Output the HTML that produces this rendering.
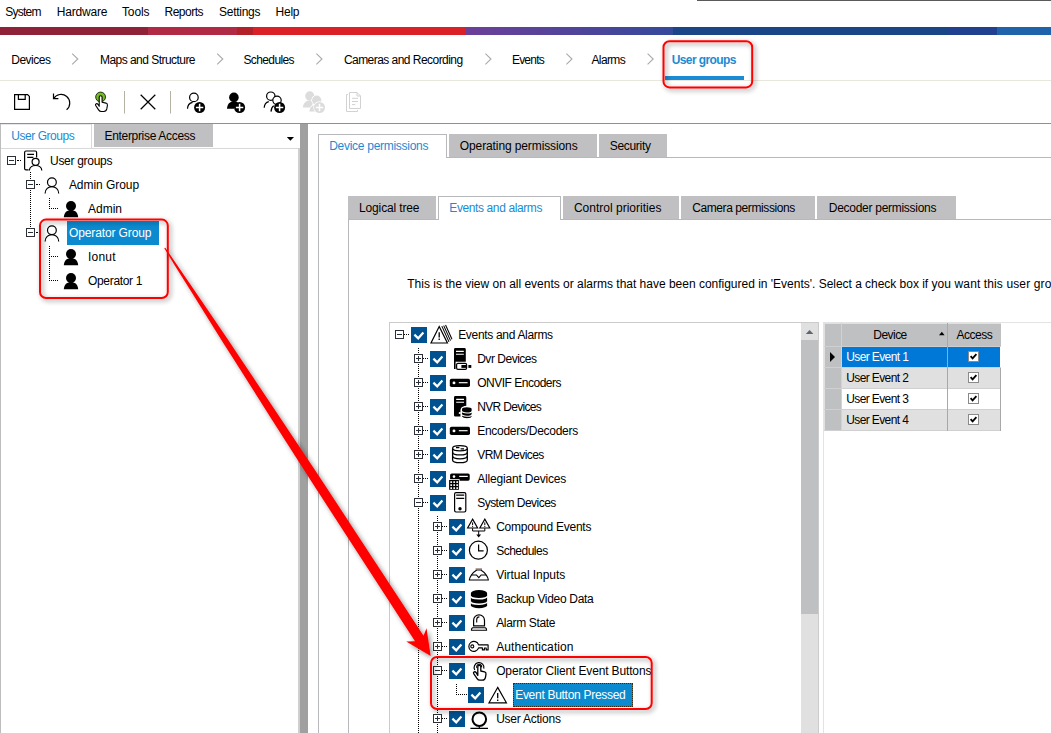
<!DOCTYPE html>
<html lang="en">
<head>
<meta charset="utf-8">
<title>Configuration Client - User groups</title>
<style>
html,body{margin:0;padding:0;background:#fff}
body{width:1051px;height:733px;position:relative;overflow:hidden;font:12px/14px "Liberation Sans",sans-serif;color:#000}
.a{position:absolute;display:block}
.t{position:absolute;white-space:pre;line-height:14px;font-size:12px;z-index:3}
.ex{width:7px;height:7px;border:1px solid #2b3038;background:#fff}
.ex i{position:absolute;background:#2b3038}
.ex .h{left:1px;top:3px;width:5px;height:1px}
.ex .v{left:3px;top:1px;width:1px;height:5px}
.ck{width:16px;height:16px;background:#00518f}
.ck svg,.cb svg{display:block}
.cb{width:9px;height:9px;border:1px solid #8a8a8a;background:#fff}
.cb svg{margin:-1px}
</style>
</head>
<body>
<div class="a" style="left:697px;top:0px;width:354px;height:1px;background:#5a5a5a;"></div>
<div class="a" style="left:0px;top:27px;width:148px;height:8px;background:#8f2239;"></div>
<div class="a" style="left:148px;top:27px;width:89px;height:8px;background:#b02a45;"></div>
<div class="a" style="left:237px;top:27px;width:16px;height:8px;background:#b22028;"></div>
<div class="a" style="left:253px;top:27px;width:212px;height:8px;background:#dc2027;"></div>
<div class="a" style="left:673px;top:27px;width:277px;height:8px;background:#1a4688;"></div>
<div class="a" style="left:950px;top:27px;width:47px;height:8px;background:#21408f;"></div>
<div class="a" style="left:997px;top:27px;width:54px;height:8px;background:#1f63ab;"></div>
<div class="a" style="left:465px;top:27px;width:208px;height:8px;background:linear-gradient(90deg,#6d3f99,#35499b);"></div>
<div class="a" style="left:0px;top:80px;width:1051px;height:1px;background:#e7e7dc;"></div>
<div class="a" style="left:665px;top:76px;width:79px;height:4px;background:#1b8bd3;"></div>
<svg class="a" style="left:0px;top:0px;z-index:2;" width="1051" height="120" viewBox="0 0 1051 120"><polyline points="72.2,53.6 77.8,59 72.2,64.4" fill="none" stroke="#a9a9ae" stroke-width="1.1"/><polyline points="217.2,53.6 222.8,59 217.2,64.4" fill="none" stroke="#a9a9ae" stroke-width="1.1"/><polyline points="316.4,53.6 322,59 316.4,64.4" fill="none" stroke="#a9a9ae" stroke-width="1.1"/><polyline points="485.4,53.6 491,59 485.4,64.4" fill="none" stroke="#a9a9ae" stroke-width="1.1"/><polyline points="566.4,53.6 572,59 566.4,64.4" fill="none" stroke="#a9a9ae" stroke-width="1.1"/><polyline points="647.6,53.6 653.2,59 647.6,64.4" fill="none" stroke="#a9a9ae" stroke-width="1.1"/><path d="M14.6,94.6 H27.6 L29.4,96.4 V109.4 H14.6 Z" stroke="#000" fill="none" stroke-width="1.2"/><path d="M18.4,94.6 V99.4 H25.2 V94.6" stroke="#000" fill="none" stroke-width="1.2"/><path d="M53.6,98.6 A8.7,8.7 0 1 1 66.6,109.8" stroke="#000" fill="none" stroke-width="1.2"/><path d="M53.5,93.6 V98.7 H58.4" stroke="#000" fill="none" stroke-width="1.2"/><circle cx="100.6" cy="97" r="4.9" fill="#74bd1f" stroke="#1c1c1c" stroke-width="0.9"/><path d="M99.2,106.3 V97.2 a1.45,1.45 0 0 1 2.9,0 V102.2 l3.9,0.9 q1.6,0.5 1.4,2.2 l-0.6,3.6 q-0.5,2.6 -3,2.6 h-2.4 q-1.8,0 -2.8,-1.6 l-2.9,-4.4 q-0.6,-1.3 0.6,-1.8 q1,-0.3 1.8,0.8 z" fill="#fff" stroke="#000" stroke-width="1.1" stroke-linejoin="round"/><rect x="124" y="91" width="1" height="22.5" fill="#b4b2a2"/><rect x="170" y="91" width="1" height="22.5" fill="#b4b2a2"/><path d="M140.7,94.8 L155.3,109.3 M155.3,94.8 L140.7,109.3" stroke="#000" fill="none" stroke-width="1.25"/><circle cx="193.9" cy="97.4" r="4.3" stroke="#000" fill="none" stroke-width="1.2"/><path d="M187.5,108.8 Q187.6,103.3 192.6,102.3" stroke="#000" fill="none" stroke-width="1.2"/><circle cx="199.6" cy="107.5" r="5.5" fill="#000"/><path d="M195.9,107.5 h7.4 M199.6,103.8 v7.4" stroke="#fff" stroke-width="1.5" fill="none"/><circle cx="233.9" cy="97.4" r="4.8" fill="#000"/><path d="M227,108.8 C227.3,104.5 229.2,102.6 232,101.6 L236.3,101.6 C237.5,102.2 238,103 238.5,104 L234,108.8 Z" fill="#000"/><circle cx="239.6" cy="107.5" r="5.5" fill="#000"/><path d="M235.9,107.5 h7.4 M239.6,103.8 v7.4" stroke="#fff" stroke-width="1.5" fill="none"/><circle cx="270.8" cy="96.2" r="4.2" stroke="#000" fill="none" stroke-width="1.2"/><path d="M264.2,107.8 Q264.5,102.6 268.8,101.6" stroke="#000" fill="none" stroke-width="1.2"/><circle cx="277" cy="100.3" r="4.2" fill="#fff" stroke="#000" stroke-width="1.2"/><path d="M271,111.6 Q271.2,107.4 273.8,105.8" stroke="#000" fill="none" stroke-width="1.2"/><circle cx="279.6" cy="107.5" r="5.5" fill="#000"/><path d="M275.9,107.5 h7.4 M279.6,103.8 v7.4" stroke="#fff" stroke-width="1.5" fill="none"/><circle cx="309.8" cy="95.9" r="4.6" fill="#dcdcdc"/><path d="M302.8,107.6 C303.2,103.6 305,101.4 308,100.4 L312,100.4 L313.5,103 L310,107.6 Z" fill="#dcdcdc"/><circle cx="316.7" cy="100.2" r="5.4" fill="#fff"/><circle cx="316.7" cy="100.2" r="4.6" fill="#dcdcdc"/><path d="M309.3,111.6 C309.8,108 311.5,106 314,105 L318,105 L318,111.6 Z" fill="#dcdcdc"/><circle cx="319.5" cy="107.5" r="6.2" fill="#fff"/><circle cx="319.5" cy="107.5" r="5.5" fill="#dcdcdc"/><path d="M315.8,107.5 h7.4 M319.5,103.8 v7.4" stroke="#fff" stroke-width="1.5" fill="none"/><path d="M349.5,92.5 H357 L360.5,96 V108.5 H349.5 Z" stroke="#d2d2d2" fill="none" stroke-width="1"/><path d="M357,92.5 V96 H360.5" stroke="#d2d2d2" fill="none" stroke-width="1"/><path d="M348,94.5 H346.5 V111.5 H357.5 V110" stroke="#d2d2d2" fill="none" stroke-width="1"/><path d="M352,98.3 H358 M352,101.5 H358 M352,104.6 H355.3" stroke="#d2d2d2" fill="none" stroke-width="1"/></svg>
<div class="a" style="left:0px;top:123px;width:1051px;height:1px;background:#939376;"></div>
<div class="a" style="left:1px;top:124px;width:91px;height:1px;background:#e6e6ec;"></div>
<div class="a" style="left:0px;top:124px;width:1px;height:609px;background:#bdbdbd;"></div>
<div class="a" style="left:91px;top:124px;width:1px;height:24px;background:#d9d9d9;"></div>
<div class="a" style="left:94px;top:124px;width:119px;height:23px;background:#c0c0c2;"></div>
<div class="a" style="left:1px;top:148px;width:298px;height:1px;background:#d9d9d9;"></div>
<div class="a" style="left:298px;top:148px;width:2px;height:585px;background:#cfcfcf;"></div>
<div class="a" style="left:300px;top:124px;width:8px;height:609px;background:#a0a0a0;"></div>
<svg class="a" style="left:286px;top:136px;" width="9" height="6" viewBox="0 0 9 6"><polygon points="0.8,1 8,1 4.4,4.8" fill="#000"/></svg>
<div class="a" style="left:67px;top:221px;width:92px;height:24px;background:#0c8acf;"></div>
<div class="a" style="left:17px;top:160px;width:4px;height:0;border-top:1px dotted #000"></div>
<div class="a" style="left:30px;top:172px;height:57px;width:0;border-left:1px dotted #000"></div>
<div class="a" style="left:36px;top:184px;width:4px;height:0;border-top:1px dotted #000"></div>
<div class="a" style="left:36px;top:232px;width:4px;height:0;border-top:1px dotted #000"></div>
<div class="a" style="left:49px;top:198px;height:11px;width:0;border-left:1px dotted #000"></div>
<div class="a" style="left:49px;top:208px;width:9px;height:0;border-top:1px dotted #000"></div>
<div class="a" style="left:49px;top:246px;height:35px;width:0;border-left:1px dotted #000"></div>
<div class="a" style="left:49px;top:256px;width:9px;height:0;border-top:1px dotted #000"></div>
<div class="a" style="left:49px;top:280px;width:9px;height:0;border-top:1px dotted #000"></div>
<div class="a ex" style="left:7px;top:156px"><i class="h"></i></div>
<div class="a ex" style="left:26px;top:180px"><i class="h"></i></div>
<div class="a ex" style="left:26px;top:228px"><i class="h"></i></div>
<div class="a" style="left:318px;top:134px;width:1px;height:599px;background:#b7b8bc;"></div>
<div class="a" style="left:318px;top:134px;width:129px;height:1px;background:#b7b8bc;"></div>
<div class="a" style="left:446px;top:134px;width:1px;height:24px;background:#b7b8bc;"></div>
<div class="a" style="left:446px;top:157px;width:605px;height:1px;background:#b7b8bc;"></div>
<div class="a" style="left:449px;top:134px;width:148px;height:23px;background:#c0c0c2;"></div>
<div class="a" style="left:599px;top:134px;width:68px;height:23px;background:#c0c0c2;"></div>
<div class="a" style="left:348px;top:219px;width:1px;height:514px;background:#b7b8bc;"></div>
<div class="a" style="left:348px;top:219px;width:91px;height:1px;background:#b7b8bc;"></div>
<div class="a" style="left:438px;top:196px;width:1px;height:24px;background:#b7b8bc;"></div>
<div class="a" style="left:438px;top:196px;width:123px;height:1px;background:#b7b8bc;"></div>
<div class="a" style="left:560px;top:196px;width:1px;height:24px;background:#b7b8bc;"></div>
<div class="a" style="left:560px;top:219px;width:491px;height:1px;background:#b7b8bc;"></div>
<div class="a" style="left:348px;top:196px;width:88px;height:23px;background:#c0c0c2;"></div>
<div class="a" style="left:563px;top:196px;width:116px;height:23px;background:#c0c0c2;"></div>
<div class="a" style="left:681px;top:196px;width:134px;height:23px;background:#c0c0c2;"></div>
<div class="a" style="left:817px;top:196px;width:139px;height:23px;background:#c0c0c2;"></div>
<div class="a" style="left:389px;top:322px;width:430px;height:1px;background:#cbcbcb;"></div>
<div class="a" style="left:389px;top:322px;width:1px;height:411px;background:#cbcbcb;"></div>
<div class="a" style="left:818px;top:322px;width:1px;height:411px;background:#cbcbcb;"></div>
<div class="a" style="left:801px;top:323px;width:17px;height:410px;background:#e0e0e0;"></div>
<div class="a" style="left:801px;top:340px;width:17px;height:273.5px;background:#bfc0c2;"></div>
<svg class="a" style="left:805px;top:329px;" width="10" height="6" viewBox="0 0 10 6"><polygon points="0.8,5 8.4,5 4.6,1" fill="#5b6670"/></svg>
<div class="a" style="left:823px;top:322px;width:228px;height:1px;background:#e3e3e3;"></div>
<div class="a" style="left:823px;top:322px;width:1px;height:411px;background:#e3e3e3;"></div>
<div class="a" style="left:824px;top:323px;width:177px;height:24px;background:#e0e0e0;"></div>
<div class="a" style="left:825px;top:324px;width:176px;height:23px;background:#bfc0c2;"></div>
<div class="a" style="left:824px;top:347px;width:1px;height:84px;background:#e0e0e0;"></div>
<div class="a" style="left:825px;top:347px;width:17px;height:84px;background:#bfc0c2;"></div>
<div class="a" style="left:842px;top:347px;width:158px;height:20px;background:#0078d7;"></div>
<div class="a" style="left:842px;top:368px;width:158px;height:20px;background:#e0e0e0;"></div>
<div class="a" style="left:842px;top:389px;width:158px;height:20px;background:#ffffff;"></div>
<div class="a" style="left:842px;top:410px;width:158px;height:20px;background:#e0e0e0;"></div>
<div class="a" style="left:824px;top:346px;width:177px;height:1px;background:#cfcfcf;"></div>
<div class="a" style="left:824px;top:367px;width:177px;height:1px;background:#d0d0d0;"></div>
<div class="a" style="left:824px;top:388px;width:177px;height:1px;background:#d0d0d0;"></div>
<div class="a" style="left:824px;top:409px;width:177px;height:1px;background:#d0d0d0;"></div>
<div class="a" style="left:824px;top:430px;width:177px;height:1px;background:#d0d0d0;"></div>
<div class="a" style="left:841px;top:323px;width:1px;height:108px;background:#d2d2d2;"></div>
<div class="a" style="left:947px;top:323px;width:1px;height:108px;background:#a8a8a8;"></div>
<div class="a" style="left:1000px;top:368px;width:1px;height:63px;background:#a8a8a8;"></div>
<div class="a" style="left:830px;top:351.5px;width:0;height:0;border:5px solid transparent;border-left:5.5px solid #000;border-right:0"></div>
<svg class="a" style="left:938px;top:331px;" width="8" height="5" viewBox="0 0 8 5"><polygon points="1,4.2 6.6,4.2 3.8,0.8" fill="#000"/></svg>
<div class="a cb" style="left:968px;top:351px"><svg width="11" height="11" viewBox="0 0 11 11"><polyline points="2.6,5.2 4.6,7.4 8.4,3.2" fill="none" stroke="#000" stroke-width="1.8"/></svg></div>
<div class="a cb" style="left:968px;top:372px"><svg width="11" height="11" viewBox="0 0 11 11"><polyline points="2.6,5.2 4.6,7.4 8.4,3.2" fill="none" stroke="#000" stroke-width="1.8"/></svg></div>
<div class="a cb" style="left:968px;top:393px"><svg width="11" height="11" viewBox="0 0 11 11"><polyline points="2.6,5.2 4.6,7.4 8.4,3.2" fill="none" stroke="#000" stroke-width="1.8"/></svg></div>
<div class="a cb" style="left:968px;top:414px"><svg width="11" height="11" viewBox="0 0 11 11"><polyline points="2.6,5.2 4.6,7.4 8.4,3.2" fill="none" stroke="#000" stroke-width="1.8"/></svg></div>
<div class="a" style="left:513px;top:683px;width:120px;height:24px;background:#0c8acf;outline:1px dotted #3a2a10;outline-offset:-1px;"></div>
<div class="a" style="left:418px;top:348px;height:385px;width:0;border-left:1px dotted #000"></div>
<div class="a" style="left:437px;top:516px;height:217px;width:0;border-left:1px dotted #000"></div>
<div class="a" style="left:456px;top:684px;height:11px;width:0;border-left:1px dotted #000"></div>
<div class="a" style="left:456px;top:694px;width:11px;height:0;border-top:1px dotted #000"></div>
<div class="a" style="left:404px;top:334px;width:5px;height:0;border-top:1px dotted #000"></div>
<div class="a ex" style="left:395px;top:330px"><i class="h"></i></div>
<div class="a ck" style="left:411px;top:327px"><svg width="16" height="16" viewBox="0 0 16 16"><polyline points="3.4,7.6 7.2,11.3 12.4,5.4" fill="none" stroke="#fff" stroke-width="2.2"/></svg></div>
<div class="a" style="left:423px;top:358px;width:5px;height:0;border-top:1px dotted #000"></div>
<div class="a ex" style="left:414px;top:354px"><i class="h"></i><i class="v"></i></div>
<div class="a ck" style="left:430px;top:351px"><svg width="16" height="16" viewBox="0 0 16 16"><polyline points="3.4,7.6 7.2,11.3 12.4,5.4" fill="none" stroke="#fff" stroke-width="2.2"/></svg></div>
<div class="a" style="left:423px;top:382px;width:5px;height:0;border-top:1px dotted #000"></div>
<div class="a ex" style="left:414px;top:378px"><i class="h"></i><i class="v"></i></div>
<div class="a ck" style="left:430px;top:375px"><svg width="16" height="16" viewBox="0 0 16 16"><polyline points="3.4,7.6 7.2,11.3 12.4,5.4" fill="none" stroke="#fff" stroke-width="2.2"/></svg></div>
<div class="a" style="left:423px;top:406px;width:5px;height:0;border-top:1px dotted #000"></div>
<div class="a ex" style="left:414px;top:402px"><i class="h"></i><i class="v"></i></div>
<div class="a ck" style="left:430px;top:399px"><svg width="16" height="16" viewBox="0 0 16 16"><polyline points="3.4,7.6 7.2,11.3 12.4,5.4" fill="none" stroke="#fff" stroke-width="2.2"/></svg></div>
<div class="a" style="left:423px;top:430px;width:5px;height:0;border-top:1px dotted #000"></div>
<div class="a ex" style="left:414px;top:426px"><i class="h"></i><i class="v"></i></div>
<div class="a ck" style="left:430px;top:423px"><svg width="16" height="16" viewBox="0 0 16 16"><polyline points="3.4,7.6 7.2,11.3 12.4,5.4" fill="none" stroke="#fff" stroke-width="2.2"/></svg></div>
<div class="a" style="left:423px;top:454px;width:5px;height:0;border-top:1px dotted #000"></div>
<div class="a ex" style="left:414px;top:450px"><i class="h"></i><i class="v"></i></div>
<div class="a ck" style="left:430px;top:447px"><svg width="16" height="16" viewBox="0 0 16 16"><polyline points="3.4,7.6 7.2,11.3 12.4,5.4" fill="none" stroke="#fff" stroke-width="2.2"/></svg></div>
<div class="a" style="left:423px;top:478px;width:5px;height:0;border-top:1px dotted #000"></div>
<div class="a ex" style="left:414px;top:474px"><i class="h"></i><i class="v"></i></div>
<div class="a ck" style="left:430px;top:471px"><svg width="16" height="16" viewBox="0 0 16 16"><polyline points="3.4,7.6 7.2,11.3 12.4,5.4" fill="none" stroke="#fff" stroke-width="2.2"/></svg></div>
<div class="a" style="left:423px;top:502px;width:5px;height:0;border-top:1px dotted #000"></div>
<div class="a ex" style="left:414px;top:498px"><i class="h"></i></div>
<div class="a ck" style="left:430px;top:495px"><svg width="16" height="16" viewBox="0 0 16 16"><polyline points="3.4,7.6 7.2,11.3 12.4,5.4" fill="none" stroke="#fff" stroke-width="2.2"/></svg></div>
<div class="a" style="left:442px;top:526px;width:5px;height:0;border-top:1px dotted #000"></div>
<div class="a ex" style="left:433px;top:522px"><i class="h"></i><i class="v"></i></div>
<div class="a ck" style="left:449px;top:519px"><svg width="16" height="16" viewBox="0 0 16 16"><polyline points="3.4,7.6 7.2,11.3 12.4,5.4" fill="none" stroke="#fff" stroke-width="2.2"/></svg></div>
<div class="a" style="left:442px;top:550px;width:5px;height:0;border-top:1px dotted #000"></div>
<div class="a ex" style="left:433px;top:546px"><i class="h"></i><i class="v"></i></div>
<div class="a ck" style="left:449px;top:543px"><svg width="16" height="16" viewBox="0 0 16 16"><polyline points="3.4,7.6 7.2,11.3 12.4,5.4" fill="none" stroke="#fff" stroke-width="2.2"/></svg></div>
<div class="a" style="left:442px;top:574px;width:5px;height:0;border-top:1px dotted #000"></div>
<div class="a ex" style="left:433px;top:570px"><i class="h"></i><i class="v"></i></div>
<div class="a ck" style="left:449px;top:567px"><svg width="16" height="16" viewBox="0 0 16 16"><polyline points="3.4,7.6 7.2,11.3 12.4,5.4" fill="none" stroke="#fff" stroke-width="2.2"/></svg></div>
<div class="a" style="left:442px;top:598px;width:5px;height:0;border-top:1px dotted #000"></div>
<div class="a ex" style="left:433px;top:594px"><i class="h"></i><i class="v"></i></div>
<div class="a ck" style="left:449px;top:591px"><svg width="16" height="16" viewBox="0 0 16 16"><polyline points="3.4,7.6 7.2,11.3 12.4,5.4" fill="none" stroke="#fff" stroke-width="2.2"/></svg></div>
<div class="a" style="left:442px;top:622px;width:5px;height:0;border-top:1px dotted #000"></div>
<div class="a ex" style="left:433px;top:618px"><i class="h"></i><i class="v"></i></div>
<div class="a ck" style="left:449px;top:615px"><svg width="16" height="16" viewBox="0 0 16 16"><polyline points="3.4,7.6 7.2,11.3 12.4,5.4" fill="none" stroke="#fff" stroke-width="2.2"/></svg></div>
<div class="a" style="left:442px;top:646px;width:5px;height:0;border-top:1px dotted #000"></div>
<div class="a ex" style="left:433px;top:642px"><i class="h"></i><i class="v"></i></div>
<div class="a ck" style="left:449px;top:639px"><svg width="16" height="16" viewBox="0 0 16 16"><polyline points="3.4,7.6 7.2,11.3 12.4,5.4" fill="none" stroke="#fff" stroke-width="2.2"/></svg></div>
<div class="a" style="left:442px;top:670px;width:5px;height:0;border-top:1px dotted #000"></div>
<div class="a ex" style="left:433px;top:666px"><i class="h"></i></div>
<div class="a ck" style="left:449px;top:663px"><svg width="16" height="16" viewBox="0 0 16 16"><polyline points="3.4,7.6 7.2,11.3 12.4,5.4" fill="none" stroke="#fff" stroke-width="2.2"/></svg></div>
<div class="a ck" style="left:468px;top:687px"><svg width="16" height="16" viewBox="0 0 16 16"><polyline points="3.4,7.6 7.2,11.3 12.4,5.4" fill="none" stroke="#fff" stroke-width="2.2"/></svg></div>
<div class="a" style="left:442px;top:718px;width:5px;height:0;border-top:1px dotted #000"></div>
<div class="a ex" style="left:433px;top:714px"><i class="h"></i><i class="v"></i></div>
<div class="a ck" style="left:449px;top:711px"><svg width="16" height="16" viewBox="0 0 16 16"><polyline points="3.4,7.6 7.2,11.3 12.4,5.4" fill="none" stroke="#fff" stroke-width="2.2"/></svg></div>
<svg class="a" style="left:0px;top:120px;" width="1051" height="613" viewBox="0 120 1051 613"><path d="M28.6,169.8 H26 Q24.6,169.8 24.6,168.4 V152.4 Q24.6,151 26,151 H35.2 Q36.6,151 36.6,152.4 V157.4" stroke="#000" fill="none" stroke-width="1.2"/><path d="M27.2,154.4 H34 M27.2,157.3 H33.4" stroke="#000" fill="none" stroke-width="1.2"/><circle cx="35.6" cy="161.8" r="3.5" stroke="#000" fill="none" stroke-width="1.2"/><path d="M29.4,170.6 C29.6,163.8 41.6,163.8 41.8,170.6" stroke="#000" fill="none" stroke-width="1.2"/><circle cx="51.9" cy="182.2" r="4.4" stroke="#000" fill="none" stroke-width="1.2"/><path d="M45.1,193.4 C45.1,184.4 58.7,184.4 58.7,193.4" stroke="#000" fill="none" stroke-width="1.2"/><circle cx="71" cy="206" r="5" fill="#000"/><path d="M63.8,217.2 C64.4,211.9 67.5,210 71,210 C74.5,210 77.6,211.9 78.2,217.2 Z" fill="#000"/><circle cx="51.9" cy="230.2" r="4.4" stroke="#000" fill="none" stroke-width="1.2"/><path d="M45.1,241.4 C45.1,232.4 58.7,232.4 58.7,241.4" stroke="#000" fill="none" stroke-width="1.2"/><circle cx="71" cy="254" r="5" fill="#000"/><path d="M63.8,265.2 C64.4,259.9 67.5,258 71,258 C74.5,258 77.6,259.9 78.2,265.2 Z" fill="#000"/><circle cx="71" cy="278" r="5" fill="#000"/><path d="M63.8,289.2 C64.4,283.9 67.5,282 71,282 C74.5,282 77.6,283.9 78.2,289.2 Z" fill="#000"/><path d="M441.85,326.15 L449,341.9" stroke="#000" fill="none" stroke-width="1.05"/><path d="M443.7,325.6 L450.5,340.6" stroke="#000" fill="none" stroke-width="1.05"/><path d="M445.55,325.05 L452,339.3" stroke="#000" fill="none" stroke-width="1.05"/><path d="M439.2,326.6 L447.4,343 H431 Z" stroke="#000" fill="#fff" stroke-width="1.2" stroke-linejoin="miter"/><path d="M439.2,332.2 v5.3 M439.2,338.6 v1.5" stroke="#000" stroke-width="1.3" fill="none"/><path d="M454,349.4 Q454,348 455.4,348 H464.4 Q465.8,348 465.8,349.4 V361.8 H455.6 V369 H454 Z" fill="#000"/><path d="M456,351.4 H463.8 M456,354.3 H463.8" stroke="#fff" stroke-width="1.1" fill="none"/><rect x="456.6" y="363.4" width="10" height="6" rx="1.3" fill="#fff" stroke="#000" stroke-width="1.2"/><rect x="461.4" y="365" width="5" height="2.9" fill="#000"/><rect x="468.4" y="365" width="2.9" height="2.9" fill="#000"/><rect x="449.8" y="378.8" width="20.2" height="8.2" rx="1.7" fill="#000"/><circle cx="454" cy="382.9" r="1.45" fill="#fff"/><path d="M458.8,382.7 H467.6" stroke="#fff" stroke-width="1.15"/><rect x="449.8" y="426.8" width="20.2" height="8.2" rx="1.7" fill="#000"/><circle cx="454" cy="430.9" r="1.45" fill="#fff"/><path d="M458.8,430.7 H467.6" stroke="#fff" stroke-width="1.15"/><path d="M454,397.4 Q454,396 455.4,396 H464.9 Q466.3,396 466.3,397.4 V406.5 Q461,407 460.6,410 V416.6 H455.4 Q454,416.6 454,415.2 Z" fill="#000"/><path d="M456.2,399.4 H464 M456.2,402.2 H464" stroke="#fff" stroke-width="1.1" fill="none"/><circle cx="459.8" cy="413" r="1.1" fill="#fff"/><path d="M461.4,409 A5.45,2.5 0 0 1 472.3,409 V416.3 A5.45,2.5 0 0 1 461.4,416.3 Z" fill="#000" stroke="#fff" stroke-width="1.3"/><path d="M461.4,410.7 A5.45,2.3 0 0 0 472.3,410.7 M461.4,413.9 A5.45,2.3 0 0 0 472.3,413.9" stroke="#fff" stroke-width="1.1" fill="none"/><path d="M452.6,448.2 V460 A7.35,2.7 0 0 0 467.3,460 V448.2" fill="#fff" stroke="#000" stroke-width="1.3"/><ellipse cx="459.95" cy="448.2" rx="7.35" ry="2.6" fill="#fff" stroke="#000" stroke-width="1.3"/><path d="M452.6,452.2 A7.35,2.7 0 0 0 467.3,452.2 M452.6,456.1 A7.35,2.7 0 0 0 467.3,456.1" fill="none" stroke="#000" stroke-width="1.3"/><path d="M456,447.6 H459.4 M460.6,448.9 H464" stroke="#000" stroke-width="1.2" fill="none"/><rect x="450.1" y="473.4" width="19.6" height="7.3" rx="1.6" fill="#000"/><path d="M459.2,476.4 H467.8" stroke="#fff" stroke-width="1.2"/><circle cx="454" cy="476.6" r="1.3" fill="#fff"/><rect x="448.3" y="479.2" width="11.3" height="11.3" fill="#fff"/><rect x="449.1" y="480" width="9.8" height="9.8" fill="#000"/><rect x="450.35" y="481.25" width="1.7" height="1.7" fill="#fff"/><rect x="450.35" y="484.25" width="1.7" height="1.7" fill="#fff"/><rect x="450.35" y="487.25" width="1.7" height="1.7" fill="#fff"/><rect x="453.35" y="481.25" width="1.7" height="1.7" fill="#fff"/><rect x="453.35" y="484.25" width="1.7" height="1.7" fill="#fff"/><rect x="453.35" y="487.25" width="1.7" height="1.7" fill="#fff"/><rect x="456.35" y="481.25" width="1.7" height="1.7" fill="#fff"/><rect x="456.35" y="484.25" width="1.7" height="1.7" fill="#fff"/><rect x="456.35" y="487.25" width="1.7" height="1.7" fill="#fff"/><rect x="454.6" y="492.6" width="11.2" height="19.4" rx="1.4" fill="#fff" stroke="#000" stroke-width="1.2"/><path d="M456.2,495.2 H464.2 M456.2,498.3 H464.2" stroke="#000" stroke-width="1.2" fill="none"/><circle cx="460" cy="508.7" r="1.7" fill="#000"/><path d="M472.6,519.1 L477.6,528 H467.6 Z" stroke="#000" fill="#fff" stroke-width="1.15"/><path d="M472.6,522.4 v2.6 M472.6,525.8 v1.1" stroke="#000" stroke-width="1" fill="none"/><path d="M484.8,519.1 L489.8,528 H479.8 Z" stroke="#000" fill="#fff" stroke-width="1.15"/><path d="M484.8,522.4 v2.6 M484.8,525.8 v1.1" stroke="#000" stroke-width="1" fill="none"/><path d="M472.6,528.2 V531 H484.8 V528.2 M478.7,531 V535.4" stroke="#000" stroke-width="1" fill="none"/><path d="M476.3,534.4 L478.7,537.5 L481.1,534.4 Z" fill="#000"/><circle cx="478.4" cy="550.2" r="9" fill="#fff" stroke="#000" stroke-width="1.2"/><path d="M478.6,544.4 V550.8 H483.6" stroke="#000" stroke-width="1.2" fill="none"/><path d="M469.3,580 H488.4 C488.2,577.4 485,572.4 480.8,570 H476.8 C472.6,572.4 469.5,577.4 469.3,580 Z" fill="#fff" stroke="#000" stroke-width="1.1" stroke-linejoin="round"/><path d="M475.6,569.2 H482" stroke="#8d7468" stroke-width="1.7"/><path d="M471.6,575 H476.4 L478.8,577.6 L481.2,575 H486" stroke="#000" stroke-width="1.1" fill="none"/><path d="M470.9,593 A8.1,3 0 0 1 487.1,593 V605.2 A8.1,3 0 0 1 470.9,605.2 Z" fill="#000"/><path d="M470.6,596 A8.1,2.7 0 0 0 487.4,596 M470.6,601.4 A8.1,2.7 0 0 0 487.4,601.4" stroke="#fff" stroke-width="1.5" fill="none"/><path d="M473.6,625.8 V620.4 a5.45,5.6 0 0 1 10.9,0 V625.8 Z" fill="#fff" stroke="#000" stroke-width="1.2"/><path d="M472.6,627.8 H485.4 Q486.6,628.4 486.6,630.2 H471.4 Q471.4,628.4 472.6,627.8 Z" fill="#fff" stroke="#000" stroke-width="1.1" stroke-linejoin="round"/><path d="M476.7,622.6 V619.8 a2.7,2.9 0 0 1 2.7,-2.9" stroke="#000" stroke-width="1.1" fill="none"/><path d="M478.6,644.9 H488.1 V649.9 H486.2 V648 H484.4 V649.9 H482.4 V647.9 H478.6 A5,5 0 1 1 478.6,644.9 Z" fill="#fff" stroke="#000" stroke-width="1.15" stroke-linejoin="round"/><circle cx="472.3" cy="646.4" r="1.5" fill="#fff" stroke="#000" stroke-width="1.1"/><path d="M474.8,670 A4.9,4.9 0 1 1 483.8,668.6" stroke="#000" fill="none" stroke-width="1.2"/><path d="M477,668 A2.5,2.5 0 1 1 481.6,667.4" stroke="#000" fill="none" stroke-width="1.1"/><path d="M477.8,675.4 V666.8 a1.5,1.5 0 0 1 3,0 V671 l3.8,0.9 q1.6,0.5 1.4,2.2 l-0.6,3.5 q-0.5,2.6 -3,2.6 h-2.5 q-1.8,0 -2.8,-1.6 l-3.4,-5 q-0.6,-1.3 0.6,-1.8 q1.1,-0.3 1.9,0.8 z" fill="#fff" stroke="#000" stroke-width="1.3" stroke-linejoin="round"/><path d="M497.7,687.4 L506.4,702.8 H489 Z" stroke="#000" fill="#fff" stroke-width="1.2" stroke-linejoin="miter"/><path d="M497.7,693 v5.3 M497.7,699.4 v1.5" stroke="#000" stroke-width="1.3" fill="none"/><circle cx="479.3" cy="719.2" r="6.8" fill="#fff" stroke="#000" stroke-width="2"/><path d="M479.3,726.4 V728 M470.4,728.3 H488" stroke="#000" stroke-width="1.2" fill="none"/></svg>
<span class="t" style="left:5.3px;top:5.0px;letter-spacing:-0.76px;">System</span>
<span class="t" style="left:56.8px;top:5.0px;letter-spacing:-0.19px;">Hardware</span>
<span class="t" style="left:122.0px;top:5.0px;letter-spacing:-0.13px;">Tools</span>
<span class="t" style="left:164.5px;top:5.0px;letter-spacing:-0.51px;">Reports</span>
<span class="t" style="left:219.0px;top:5.0px;letter-spacing:-0.27px;">Settings</span>
<span class="t" style="left:275.5px;top:5.0px;letter-spacing:-0.23px;">Help</span>
<span class="t" style="left:11.3px;top:53.0px;letter-spacing:-0.51px;">Devices</span>
<span class="t" style="left:100.0px;top:53.0px;letter-spacing:-0.54px;">Maps and Structure</span>
<span class="t" style="left:243.5px;top:53.0px;letter-spacing:-0.63px;">Schedules</span>
<span class="t" style="left:343.9px;top:53.0px;letter-spacing:-0.54px;">Cameras and Recording</span>
<span class="t" style="left:511.9px;top:53.0px;letter-spacing:-0.76px;">Events</span>
<span class="t" style="left:591.4px;top:53.0px;letter-spacing:-0.59px;">Alarms</span>
<span class="t" style="left:671.7px;top:53.0px;letter-spacing:-0.59px;color:#1b8bd3;font-weight:bold;">User groups</span>
<span class="t" style="left:11.3px;top:129.0px;letter-spacing:-0.46px;color:#1b8bd3;">User Groups</span>
<span class="t" style="left:104.5px;top:129.0px;letter-spacing:-0.32px;">Enterprise Access</span>
<span class="t" style="left:50.0px;top:153.5px;letter-spacing:-0.29px;">User groups</span>
<span class="t" style="left:68.9px;top:177.5px;letter-spacing:-0.05px;">Admin Group</span>
<span class="t" style="left:88.0px;top:201.5px;letter-spacing:-0.00px;">Admin</span>
<span class="t" style="left:69.0px;top:225.5px;letter-spacing:-0.12px;color:#fff;">Operator Group</span>
<span class="t" style="left:88.0px;top:249.5px;letter-spacing:0.20px;">Ionut</span>
<span class="t" style="left:88.0px;top:273.5px;letter-spacing:-0.32px;">Operator 1</span>
<span class="t" style="left:329.2px;top:139.0px;letter-spacing:-0.28px;color:#1b8bd3;">Device permissions</span>
<span class="t" style="left:459.8px;top:139.0px;letter-spacing:-0.11px;">Operating permissions</span>
<span class="t" style="left:609.8px;top:139.0px;letter-spacing:-0.32px;">Security</span>
<span class="t" style="left:359.0px;top:201.0px;letter-spacing:-0.14px;">Logical tree</span>
<span class="t" style="left:449.3px;top:201.0px;letter-spacing:-0.39px;color:#1b8bd3;">Events and alarms</span>
<span class="t" style="left:573.9px;top:201.0px;letter-spacing:0.01px;">Control priorities</span>
<span class="t" style="left:692.2px;top:201.0px;letter-spacing:-0.41px;">Camera permissions</span>
<span class="t" style="left:828.8px;top:201.0px;letter-spacing:-0.28px;">Decoder permissions</span>
<span class="t" style="left:407.3px;top:277.0px;letter-spacing:-0.01px;">This is the view on all events or alarms that have been configured in 'Events'. </span>
<span class="t" style="left:818.7px;top:277.0px;letter-spacing:-0.03px;">Select a check box if </span>
<span class="t" style="left:931.4px;top:277.0px;letter-spacing:0.12px;">you want this user group</span>
<span class="t" style="left:458.2px;top:328.0px;letter-spacing:-0.32px;">Events and Alarms</span>
<span class="t" style="left:477.2px;top:352.0px;letter-spacing:-0.48px;">Dvr Devices</span>
<span class="t" style="left:477.2px;top:376.0px;letter-spacing:-0.49px;">ONVIF Encoders</span>
<span class="t" style="left:477.2px;top:400.0px;letter-spacing:-0.67px;">NVR Devices</span>
<span class="t" style="left:477.2px;top:424.0px;letter-spacing:-0.27px;">Encoders/Decoders</span>
<span class="t" style="left:477.2px;top:448.0px;letter-spacing:-0.55px;">VRM Devices</span>
<span class="t" style="left:477.2px;top:472.0px;letter-spacing:-0.18px;">Allegiant Devices</span>
<span class="t" style="left:477.2px;top:496.0px;letter-spacing:-0.53px;">System Devices</span>
<span class="t" style="left:496.2px;top:520.0px;letter-spacing:-0.25px;">Compound Events</span>
<span class="t" style="left:496.2px;top:544.0px;letter-spacing:-0.51px;">Schedules</span>
<span class="t" style="left:496.2px;top:568.0px;letter-spacing:-0.06px;">Virtual Inputs</span>
<span class="t" style="left:496.2px;top:592.0px;letter-spacing:-0.31px;">Backup Video Data</span>
<span class="t" style="left:496.2px;top:616.0px;letter-spacing:-0.34px;">Alarm State</span>
<span class="t" style="left:496.2px;top:640.0px;letter-spacing:0.10px;">Authentication</span>
<span class="t" style="left:496.2px;top:664.0px;letter-spacing:-0.15px;">Operator Client Event Buttons</span>
<span class="t" style="left:515.2px;top:688.0px;letter-spacing:-0.29px;color:#fff;">Event Button Pressed</span>
<span class="t" style="left:496.2px;top:712.0px;letter-spacing:-0.24px;">User Actions</span>
<span class="t" style="left:873.3px;top:327.5px;letter-spacing:-0.54px;">Device</span>
<span class="t" style="left:956.5px;top:327.5px;letter-spacing:-0.50px;">Access</span>
<span class="t" style="left:846.2px;top:349.7px;letter-spacing:-0.61px;color:#fff;">User Event 1</span>
<span class="t" style="left:846.2px;top:370.7px;letter-spacing:-0.61px;">User Event 2</span>
<span class="t" style="left:846.2px;top:391.7px;letter-spacing:-0.61px;">User Event 3</span>
<span class="t" style="left:846.2px;top:412.7px;letter-spacing:-0.61px;">User Event 4</span>
<svg class="a" style="left:0;top:0;z-index:5" width="1051" height="733" viewBox="0 0 1051 733"><defs><filter id="sh" x="-10%" y="-10%" width="120%" height="120%"><feGaussianBlur in="SourceAlpha" stdDeviation="2.4"/><feOffset dx="1.6" dy="1.6" result="b"/><feComponentTransfer><feFuncA type="linear" slope="0.45"/></feComponentTransfer><feMerge><feMergeNode/><feMergeNode in="SourceGraphic"/></feMerge></filter></defs><g filter="url(#sh)" fill="none" stroke="#ff0000" stroke-width="2"><rect x="663.5" y="41.2" width="88.7" height="46.2" rx="6"/><rect x="40" y="219.6" width="127.8" height="78.4" rx="6"/><rect x="431" y="657" width="220.7" height="52" rx="6"/></g><polygon filter="url(#sh)" points="165.3,247.7 176.6,264.2 193.5,289.0 227.2,338.6 240.0,357.7 277.3,413.4 319.4,476.7 358.8,536.9 423.5,635.7 426.5,628.3 430.7,656.0 406.2,641.5 415.0,641.2 350.8,542.2 311.6,481.8 270.7,417.7 234.8,361.1 222.5,341.7 190.7,290.8 174.8,265.4 164.3,248.3" fill="#ff0000"/></svg>
</body>
</html>
